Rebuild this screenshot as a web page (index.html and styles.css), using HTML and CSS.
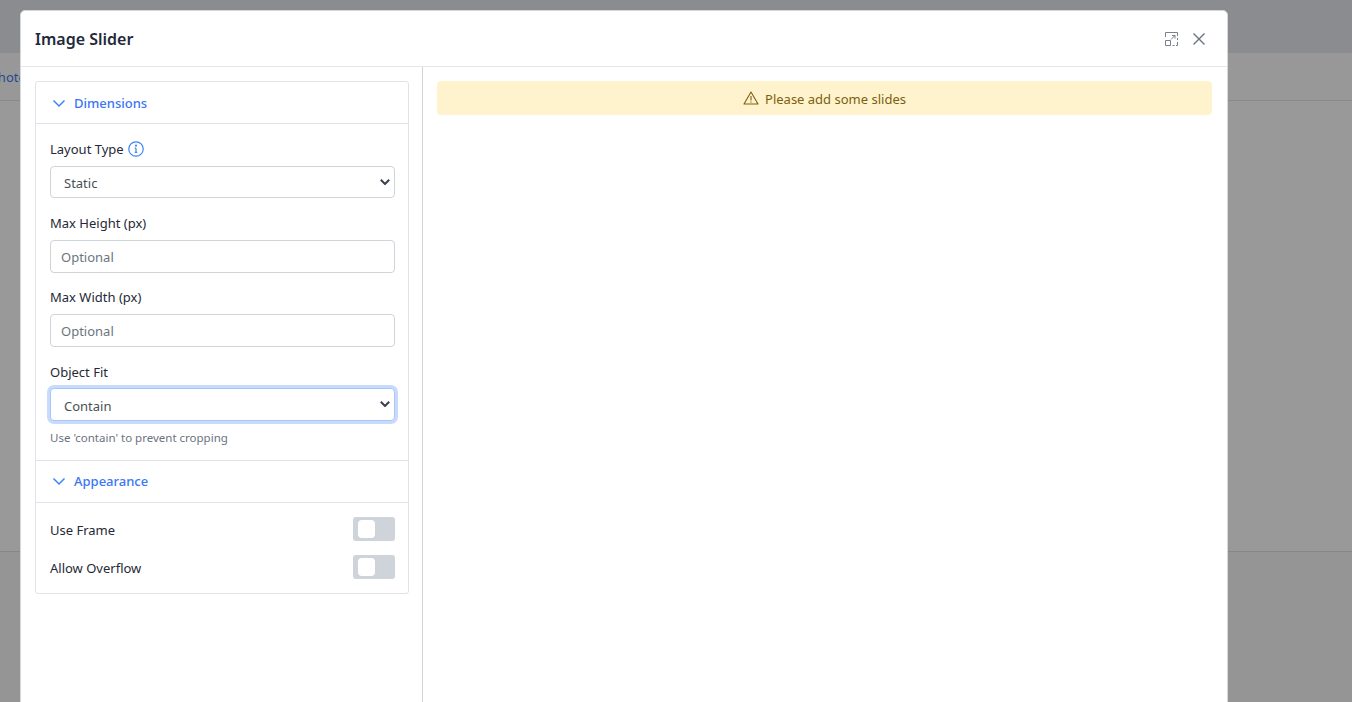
FILE: index.html
```html
<!DOCTYPE html>
<html lang="en">
<head>
<meta charset="utf-8">
<title>Image Slider</title>
<link rel="stylesheet" href="styles.css">
</head>
<body>
<div class="page">
  <div class="page-top"></div>
  <div class="page-tabs"><span class="page-tab">Photo</span></div>
  <div class="page-main"></div>
  <div class="page-foot"></div>
</div>
<div class="modal">
  <header class="modal-head">
    <h1 class="modal-title">Image Slider</h1>
    <div class="modal-actions">
      <svg class="icon-expand" width="13" height="14" viewBox="0 0 13 14" fill="none" stroke="#7a8089" stroke-width="1">
        <path d="M.5 5V.5h12V4M12.500 6v2M12.500 10v3.500H11M9.500 13.500H7.500"/>
        <path d="M.5 8.500h5v5h-5z"/>
        <path d="M6 7.500l4-4M7 3.500h3v3"/>
      </svg>
      <svg class="icon-close" width="14" height="14" viewBox="0 0 14 14" fill="none" stroke="#6b7280" stroke-width="1.400">
        <path d="M1.500 1.500l11 11M12.500 1.500l-11 11"/>
      </svg>
    </div>
  </header>
  <div class="modal-body">
    <aside class="side">
      <div class="card">
        <button class="sec-head" type="button">
          <svg width="14" height="14" viewBox="0 0 14 14" fill="none" stroke="#3b82f6" stroke-width="1.500"><path d="M1.500 4.500L7 10l5.500-5.500"/></svg>
          <span>Dimensions</span>
        </button>
        <div class="sec-body dims">
          <div class="field">
            <label class="label">Layout Type
              <svg width="16" height="16" viewBox="0 0 16 16" fill="none" stroke="#3b82f6" stroke-width="1.200"><circle cx="8" cy="8" r="7.200"/><path d="M8 7.200v4M6.800 11.400h2.400M6.800 7.200H8"/><circle cx="8" cy="4.600" r=".5" fill="#3b82f6"/></svg>
            </label>
            <div class="select-box"><span class="value">Static</span><svg class="caret" width="10" height="6" viewBox="0 0 10 6" fill="none" stroke="#374151" stroke-width="2"><path d="M.8.8L5 5l4.200-4.200"/></svg></div>
          </div>
          <div class="field">
            <label class="label">Max Height (px)</label>
            <div class="input-box">Optional</div>
          </div>
          <div class="field">
            <label class="label">Max Width (px)</label>
            <div class="input-box">Optional</div>
          </div>
          <div class="field">
            <label class="label label-fit">Object Fit</label>
            <div class="select-box focused"><span class="value">Contain</span><svg class="caret" width="10" height="6" viewBox="0 0 10 6" fill="none" stroke="#374151" stroke-width="2"><path d="M.8.8L5 5l4.200-4.200"/></svg></div>
            <p class="hint">Use 'contain' to prevent cropping</p>
          </div>
        </div>
        <button class="sec-head sec-head-top" type="button">
          <svg width="14" height="14" viewBox="0 0 14 14" fill="none" stroke="#3b82f6" stroke-width="1.500"><path d="M1.500 4.500L7 10l5.500-5.500"/></svg>
          <span>Appearance</span>
        </button>
        <div class="sec-body toggles">
          <div class="toggle-row"><span class="toggle-label">Use Frame</span><span class="toggle"><span class="knob"></span></span></div>
          <div class="toggle-row"><span class="toggle-label">Allow Overflow</span><span class="toggle"><span class="knob"></span></span></div>
        </div>
      </div>
    </aside>
    <main class="preview">
      <div class="alert">
        <svg width="16" height="14" viewBox="0 0 16 14" fill="none" stroke="#7c5e10" stroke-width="1.100"><path d="M8 1L1 13h14z" stroke-linejoin="round"/><path d="M8 5v4.400M8 10.400v1.200"/></svg>
        <span class="alert-text">Please add some slides</span>
      </div>
    </main>
  </div>
</div>
</body>
</html>
```
FILE: styles.css
```css
* { box-sizing: border-box; }
html, body { margin: 0; height: 100%; overflow: hidden; }
body { font-family: "Noto Sans", "Open Sans", sans-serif; font-size: 14px; color: #1f2937; background: #989898; }
.page { height: 702px; display: flex; flex-direction: column; }
.page-top { height: 53px; background: #8b8c90; }
.page-tabs { height: 48px; background: #989898; border-bottom: 1px solid #87878c; display: flex; align-items: center; overflow: hidden; }
.page-tab { margin-left: -10px; color: #24488f; font-size: 13px; }
.page-main { height: 451px; background: #999; border-bottom: 1px solid #87878a; }
.page-foot { flex: 1; background: #959596; }
.modal { position: absolute; left: 20px; top: 10px; width: 1208px; height: 720px; background: #fff; border: 1px solid #d6d7da; border-radius: 5px; display: flex; flex-direction: column; }
.modal-head { height: 56px; flex: none; border-bottom: 1px solid #e5e7eb; display: flex; align-items: center; justify-content: space-between; padding: 0 21px 0 14px; }
.modal-title { margin: 0; font-size: 16px; font-weight: 600; color: #1f2937; line-height: 56px; }
.modal-actions { display: flex; align-items: center; gap: 14px; }
.modal-body { flex: 1; display: flex; min-height: 0; }
.side { width: 402px; flex: none; border-right: 1px solid #d1d5db; padding: 14px 13px 0 14px; }
.card { border: 1px solid #e1e3e8; border-radius: 3px; }
.sec-head { width: 100%; height: 42px; display: flex; align-items: center; gap: 8px; padding: 0 0 0 16px; margin: 0; background: none; border: 0; border-bottom: 1px solid #e1e3e8; font: inherit; font-size: 13px; font-weight: 500; color: #3b76f6; }
.sec-head-top { border-top: 1px solid #e1e3e8; height: 43px; padding-bottom: 2px; }
.sec-body { padding: 15px 13px 0 14px; }
.dims { height: 336px; }
.field { margin-bottom: 14px; }
.field:first-child { margin-bottom: 15px; }
.label { display: flex; align-items: center; gap: 4px; height: 20px; font-size: 13px; margin-bottom: 7px; color: #1f2937; }
.label-fit { padding-top: 2px; }
.select-box, .input-box { height: 32px; border: 1px solid #ced4da; border-radius: 4px; font-size: 13px; display: flex; align-items: center; color: #495057; background: #fff; position: relative; }
.input-box { height: 33px; padding-left: 10px; color: #6c757d; }
.select-box { padding-left: 13px; }
.value { padding-top: 2px; }
.caret { position: absolute; right: 4px; top: 12px; }
.focused { border-color: #a9c6fc; box-shadow: 0 0 0 3px #c8dbfd; height: 33px; }
.hint { margin: 9px 0 0; font-size: 11.500px; color: #6b7280; line-height: 16px; }
.toggles { padding-top: 14px; padding-bottom: 14px; }
.toggle-row { display: flex; align-items: center; justify-content: space-between; height: 24px; font-size: 13px; margin-bottom: 14px; }
.toggle-row:last-child { margin-bottom: 0; }
.toggle-label { padding-top: 2px; }
.toggle { width: 42px; height: 24px; background: #ced4da; border-radius: 3px; display: flex; align-items: center; padding-left: 5px; }
.knob { width: 17px; height: 18px; background: #fff; border-radius: 4px; }
.preview { flex: 1; padding: 14px 15px 0 14px; }
.alert { height: 34px; background: #fff3cd; border-radius: 4px; color: #7c5e10; font-size: 13px; display: flex; align-items: center; justify-content: center; gap: 6px; }
.alert-text { padding-top: 2px; }
```
